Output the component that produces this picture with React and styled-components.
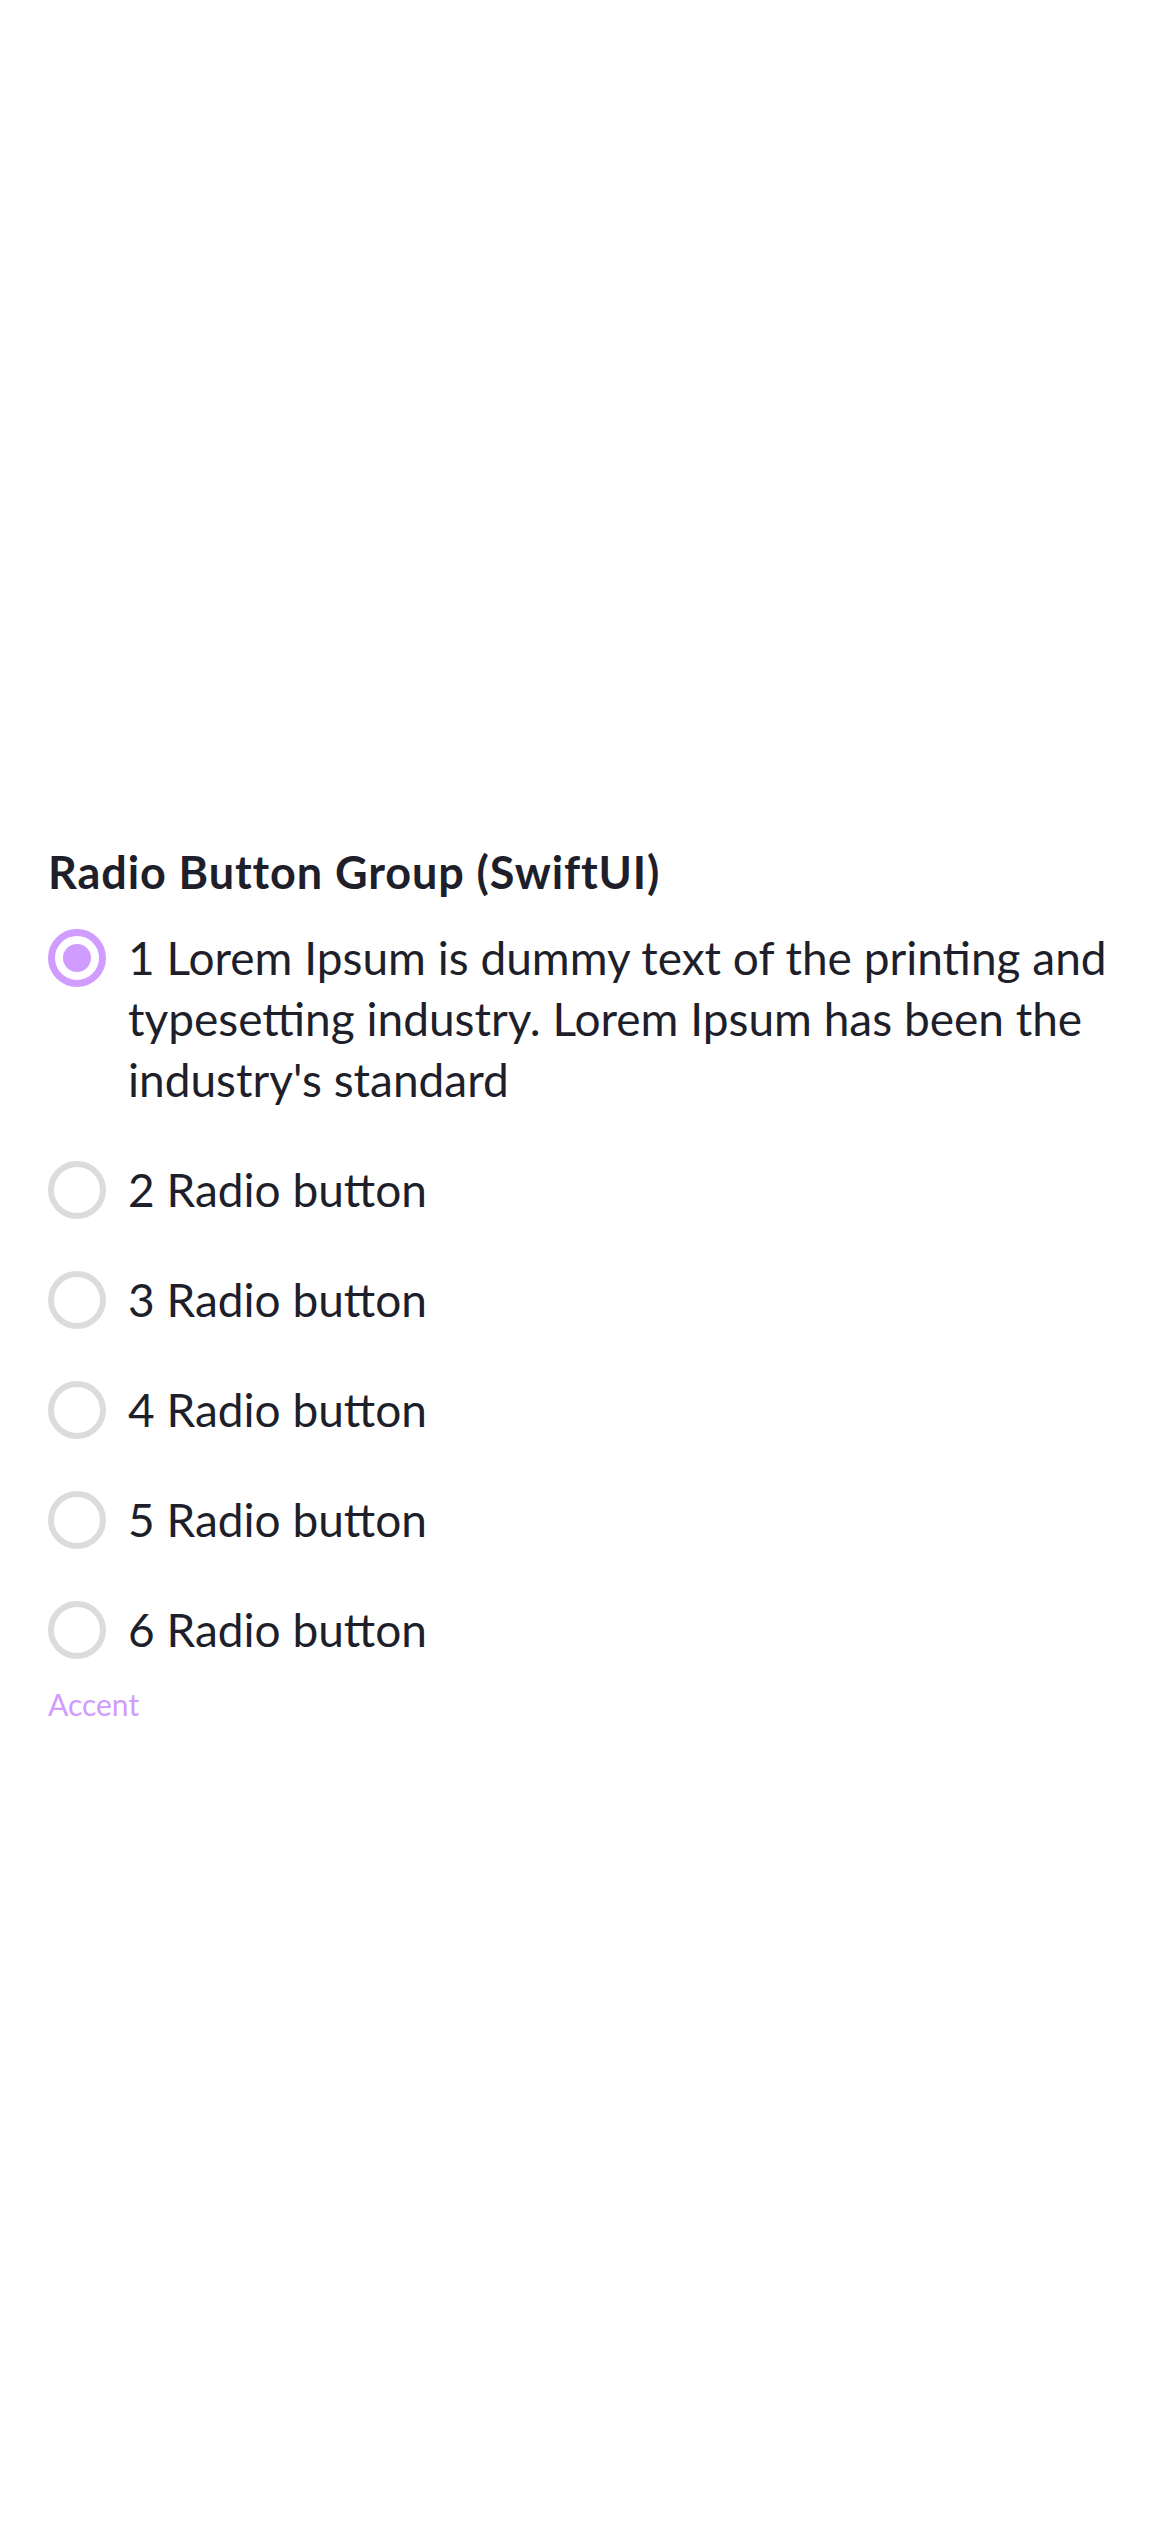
import React, { useState } from 'react';
import styled, { createGlobalStyle } from 'styled-components';

const GlobalStyle = createGlobalStyle`
  html, body {
    margin: 0;
    padding: 0;
    background: #ffffff;
  }
  body {
    font-family: Lato, "Noto Sans", sans-serif;
    color: #1e1f2b;
  }
`;

const accent = '#d09cff';

const options = [
  { id: 1, label: "1 Lorem Ipsum is dummy text of the printing and typesetting industry. Lorem Ipsum has been the industry's standard" },
  { id: 2, label: '2 Radio button' },
  { id: 3, label: '3 Radio button' },
  { id: 4, label: '4 Radio button' },
  { id: 5, label: '5 Radio button' },
  { id: 6, label: '6 Radio button' },
];

const RadioGroup = () => {
  const [selected, setSelected] = useState(1);

  return (
    <Section>
      <Title>Radio Button Group (SwiftUI)</Title>
      <List role='radiogroup'>
        {options.map((o) => (
          <Row key={o.id} onClick={() => setSelected(o.id)}>
            <Circle $checked={selected === o.id}>
              {selected === o.id && <Dot />}
            </Circle>
            <Label>{o.label}</Label>
          </Row>
        ))}
      </List>
      <Caption>Accent</Caption>
    </Section>
  );
};

const App = () => (
  <>
    <GlobalStyle />
    <Page>
      <RadioGroup />
    </Page>
  </>
);

const Page = styled.main`
  width: 1170px;
  min-height: 2532px;
  box-sizing: border-box;
  padding: 845px 48px 0;
`;

const Section = styled.section`
  display: flex;
  flex-direction: column;
`;

const Title = styled.h2`
  margin: 0;
  font-size: 45px;
  line-height: 54px;
  font-weight: 700;
  letter-spacing: 0.9px;
  color: #1e1f2b;
`;

const List = styled.div`
  display: flex;
  flex-direction: column;
  gap: 49px;
  margin-top: 28px;
`;

const Row = styled.div`
  display: flex;
  align-items: flex-start;
  gap: 22px;
  cursor: pointer;
`;

const Circle = styled.span`
  flex: none;
  box-sizing: border-box;
  width: 58px;
  height: 58px;
  margin-top: 1.5px;
  border-radius: 50%;
  border: ${(p) => (p.$checked ? `7.5px solid ${accent}` : '6px solid #dcdcde')};
  display: grid;
  place-items: center;
`;

const Dot = styled.span`
  width: 28px;
  height: 28px;
  border-radius: 50%;
  background: ${accent};
`;

const Label = styled.span`
  font-size: 46px;
  line-height: 61px;
  color: #1e1f2b;
`;

const Caption = styled.p`
  margin: 26px 0 0;
  font-size: 30px;
  line-height: 36px;
  color: ${accent};
`;

export default App;
